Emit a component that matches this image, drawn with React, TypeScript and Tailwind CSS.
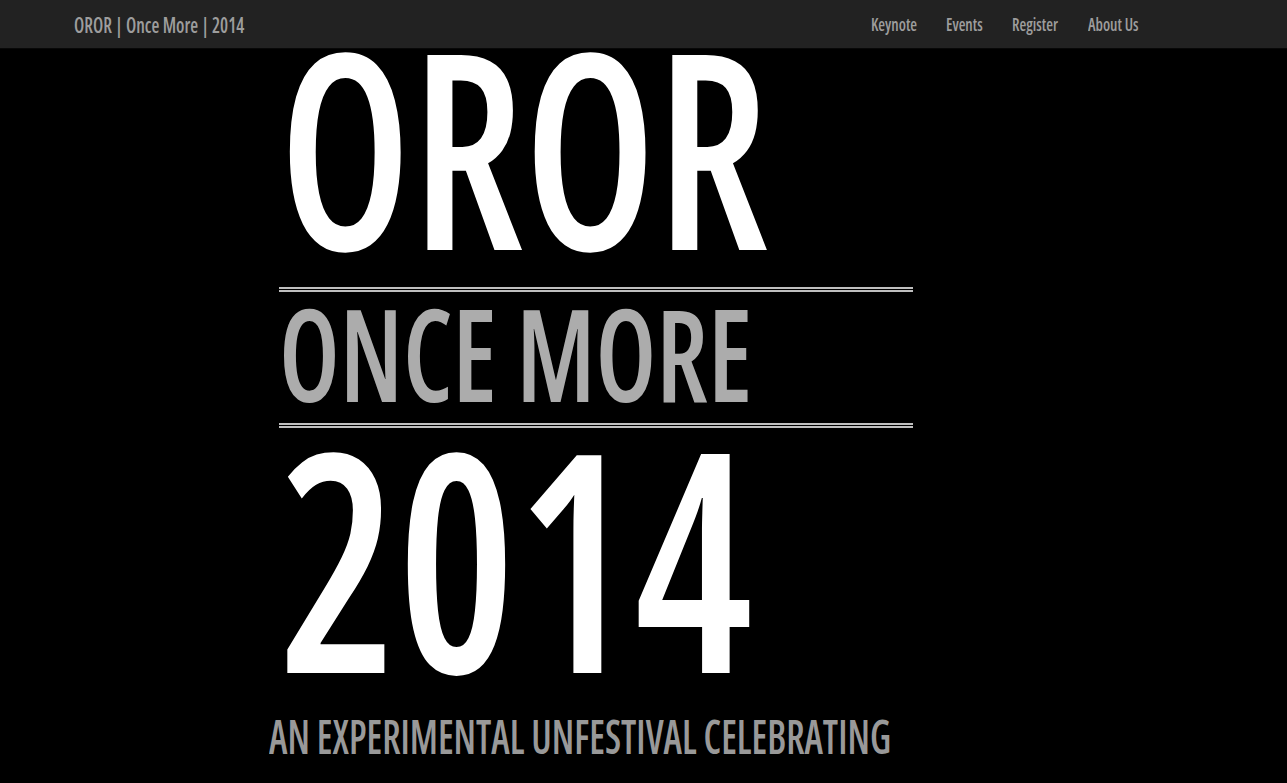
const navLinks = [
  { label: 'Keynote', w: 'w-[45px]' },
  { label: 'Events', w: 'w-[36px]' },
  { label: 'Register', w: 'w-[46px]' },
  { label: 'About Us', w: 'w-[51px]' },
];

export default function App() {
  return (
    <div className="min-h-screen bg-black font-['Open_Sans',sans-serif] font-stretch-condensed overflow-hidden">
      <nav className="h-[49px] bg-[#222] border-b border-[#080808] flex items-center">
        <a className="ml-[74px] w-[170px] text-[22px] font-semibold text-[#9d9d9d] leading-none whitespace-nowrap">
          <span className="inline-block origin-left scale-x-[0.82]">OROR | Once More | 2014</span>
        </a>
        <ul className="ml-auto mr-[148px] flex gap-[30px]">
          {navLinks.map((l) => (
            <li key={l.label} className={`${l.w} text-[18px] font-semibold text-[#9d9d9d] leading-none whitespace-nowrap`}>
              <span className="inline-block origin-left scale-x-[0.86]">{l.label}</span>
            </li>
          ))}
        </ul>
      </nav>

      <main className="ml-[279px] w-[634px]">
        <h1 className="origin-left scale-x-[0.852] text-[273px] leading-[190px] font-[650] text-white whitespace-nowrap">
          OROR
        </h1>
        <div className="mt-[48px] border-t-[5px] border-double border-[#bfbfbf]" />
        <h2 className="mt-[6px] origin-left scale-x-[0.835] text-[128px] leading-[110px] font-[650] text-[#acacac] whitespace-nowrap">
          ONCE MORE
        </h2>
        <div className="mt-[15px] border-t-[5px] border-double border-[#bfbfbf]" />
        <h2 className="mt-[12px] origin-left scale-x-[0.868] text-[305px] leading-[230px] font-[650] text-white whitespace-nowrap">
          2014
        </h2>
        <p className="mt-[42px] -ml-[10px] origin-left scale-x-[0.825] text-[46px] leading-[48px] font-[650] text-[#999] whitespace-nowrap">
          AN EXPERIMENTAL UNFESTIVAL CELEBRATING
        </p>
      </main>
    </div>
  );
}
